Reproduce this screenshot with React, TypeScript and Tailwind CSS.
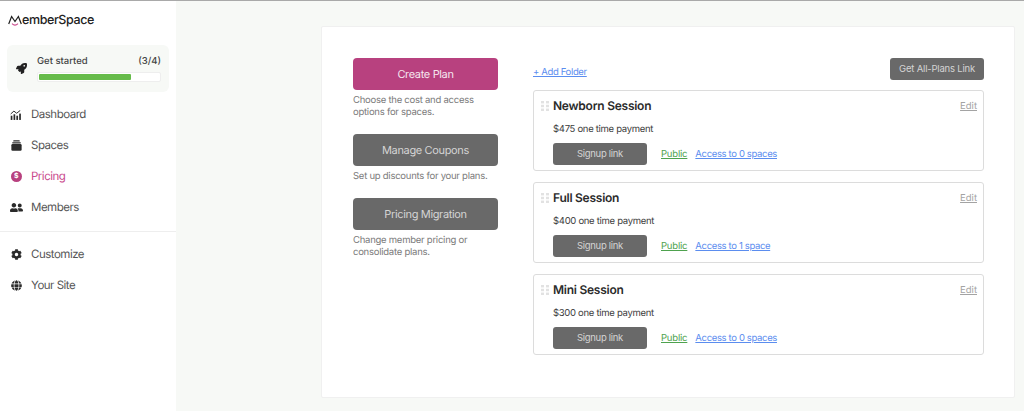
import React from 'react';
import { FaRocket, FaUserFriends, FaCog, FaGlobe } from 'react-icons/fa';

interface PlanProps {
  name: string;
  price: string;
  access: string;
}

const plans: PlanProps[] = [
  { name: 'Newborn Session', price: '$475 one time payment', access: 'Access to 0 spaces' },
  { name: 'Full Session', price: '$400 one time payment', access: 'Access to 1 space' },
  { name: 'Mini Session', price: '$300 one time payment', access: 'Access to 0 spaces' },
];

const actions = [
  { label: 'Create Plan', text: ['Choose the cost and access', 'options for spaces.'], color: 'bg-[#b8417f] text-[#f6e7ef]', gap: 'mb-[15px]' },
  { label: 'Manage Coupons', text: ['Set up discounts for your plans.'], color: 'bg-[#696969] text-[#d4d4d4]', gap: 'mb-[15px]' },
  { label: 'Pricing Migration', text: ['Change member pricing or', 'consolidate plans.'], color: 'bg-[#696969] text-[#d4d4d4]', gap: '' },
];

const DashIcon = () => (
  <svg width="12" height="10" viewBox="0 0 17 14" fill="#2a2a2a">
    <rect x="1" y="8" width="2.4" height="6" />
    <rect x="5" y="6" width="2.4" height="8" />
    <rect x="9" y="8" width="2.4" height="6" />
    <rect x="13" y="5" width="2.4" height="9" />
    <path d="M1 5.5 5.5 1.5 9.5 4.5 14.5 .5" fill="none" stroke="#2a2a2a" strokeWidth="1.4" />
  </svg>
);

const SpacesIcon = () => (
  <svg width="11" height="11" viewBox="0 0 15 14" fill="#2a2a2a">
    <rect x="3" y="0" width="9" height="1.6" rx=".8" />
    <rect x="1.5" y="2.4" width="12" height="1.8" rx=".9" />
    <rect x="0.5" y="5" width="14" height="9" rx="1.6" />
  </svg>
);

const PricingIcon = () => (
  <span className="w-[11px] h-[11px] rounded-full bg-[#b8417f] text-white text-[7px] font-bold flex items-center justify-center">
    $
  </span>
);

const GripIcon = () => (
  <svg width="8" height="10" viewBox="0 0 8 10" fill="#e2e2e2" className="mt-[3px]">
    <rect x="0" y="0" width="3" height="2.4" />
    <rect x="5" y="0" width="3" height="2.4" />
    <rect x="0" y="3.8" width="3" height="2.4" />
    <rect x="5" y="3.8" width="3" height="2.4" />
    <rect x="0" y="7.6" width="3" height="2.4" />
    <rect x="5" y="7.6" width="3" height="2.4" />
  </svg>
);

const NavItem = ({ icon, label, active }: { icon: React.ReactNode; label: string; active?: boolean }) => (
  <div className={`h-[31px] flex items-center pl-[10px] text-[11.5px] tracking-[-0.5px] ${active ? 'text-[#c9488c]' : 'text-[#555]'}`}>
    <span className="w-[21px] pr-[9px] flex justify-center items-center text-[#2a2a2a]">{icon}</span>
    <span>{label}</span>
  </div>
);

const PlanCard = ({ name, price, access }: PlanProps) => (
  <div className="h-[81px] border border-[#dcdcdc] rounded-[3px] bg-white pl-[7px] pr-[6px] pt-[7px]">
    <div className="flex items-start">
      <GripIcon />
      <div className="ml-[4px] flex-1">
        <div className="h-[16px] flex justify-between items-start">
          <span className="text-[12px] leading-[16px] font-semibold tracking-[-0.25px] text-[#2b2b2b]">{name}</span>
          <a className="text-[9.5px] leading-[18px] text-[#a3a3a3] underline">Edit</a>
        </div>
        <p className="text-[9.5px] leading-[14px] tracking-[-0.3px] text-[#3c3c3c] mt-[9px]">{price}</p>
        <div className="flex items-center mt-[6px]">
          <button className="w-[94px] h-[22px] rounded-[3px] bg-[#696969] text-[#d4d4d4] text-[9.5px] tracking-[-0.3px]">
            Signup link
          </button>
          <a className="ml-[14px] mt-[2px] text-[9.5px] tracking-[-0.2px] text-[#4ea24e] underline">Public</a>
          <a className="ml-[8px] mt-[2px] text-[9.5px] tracking-[-0.35px] text-[#5b8def] underline">{access}</a>
        </div>
      </div>
    </div>
  </div>
);

export default function App() {
  return (
    <div className="w-[1024px] h-[411px] overflow-hidden flex flex-col bg-[#f7f9f6] font-['Inter',sans-serif] [text-rendering:geometricPrecision] border-t border-[#a9a9a9]">
      <div className="flex flex-1 min-h-0">
        <aside className="w-[176px] bg-white shrink-0 flex flex-col">
          <div className="h-[44px] pl-[8px] pt-[11px] flex items-start text-[12.5px] leading-[18px] font-medium tracking-[-0.4px] text-[#222]">
            <svg width="14" height="12" viewBox="0 0 14 12" fill="none" className="mt-[3px]">
              <path d="M.7 9 3.6 1.5 7 6.5 10.4 1.5 13.3 9" stroke="#1e1e1e" strokeWidth="1.2" />
              <path d="M4 8.6c1.8 1.8 4.2 1.8 6 0" stroke="#c9488c" strokeWidth="1.1" />
            </svg>
            <span>emberSpace</span>
          </div>
          <div className="mx-[7px] h-[47px] rounded-[6px] bg-[#f7f9f6] flex items-center pl-[9px] pr-[8px]">
            <FaRocket className="text-[#222] text-[11px]" />
            <div className="ml-[10px] flex-1">
              <div className="flex justify-between text-[9.5px] leading-[13px] font-medium text-[#444]">
                <span>Get started</span>
                <span>(3/4)</span>
              </div>
              <div className="h-[10px] mt-[4px] border border-[#eee] rounded-[2px] bg-white p-[1px]">
                <div className="h-full w-[77%] bg-[#66bb4a] rounded-[1px]" />
              </div>
            </div>
          </div>
          <nav className="mt-[7px]">
            <NavItem icon={<DashIcon />} label="Dashboard" />
            <NavItem icon={<SpacesIcon />} label="Spaces" />
            <NavItem icon={<PricingIcon />} label="Pricing" active />
            <NavItem icon={<FaUserFriends className="text-[13px] shrink-0" />} label="Members" />
          </nav>
          <div className="border-t border-[#eeeeee] mt-[8px] pt-[7px]">
            <NavItem icon={<FaCog className="text-[11px] shrink-0" />} label="Customize" />
            <NavItem icon={<FaGlobe className="text-[11px] shrink-0" />} label="Your Site" />
          </div>
        </aside>

        <main className="flex-1 pl-[145px] pr-[9px] pt-[25px] pb-[13px]">
          <div className="h-full bg-white border border-[#f0f0f0] rounded-[2px] pl-[31px] pr-[30px] pt-[31px] flex">
            <div className="w-[145px] shrink-0">
              {actions.map((a) => (
                <div key={a.label} className={a.gap}>
                  <div className={`h-[32px] rounded-[4px] ${a.color} text-[11px] tracking-[-0.35px] flex items-center justify-center`}>
                    {a.label}
                  </div>
                  <p className="mt-[5px] text-[9.5px] leading-[12px] tracking-[-0.25px] text-[#7a7a7a]">
                    {a.text.map((t) => (
                      <span key={t} className="block">{t}</span>
                    ))}
                  </p>
                </div>
              ))}
            </div>
            <div className="ml-[35px] flex-1">
              <div className="h-[32px] flex justify-between items-start">
                <a className="mt-[8px] text-[9.5px] leading-[13px] tracking-[-0.35px] text-[#5b8def] underline">+ Add Folder</a>
                <button className="w-[94px] h-[22px] rounded-[3px] bg-[#696969] text-[#d4d4d4] text-[9.5px] tracking-[-0.2px]">
                  Get All-Plans Link
                </button>
              </div>
              <div className="flex flex-col gap-[11px]">
                {plans.map((p) => (
                  <PlanCard key={p.name} {...p} />
                ))}
              </div>
            </div>
          </div>
        </main>
      </div>
    </div>
  );
}
